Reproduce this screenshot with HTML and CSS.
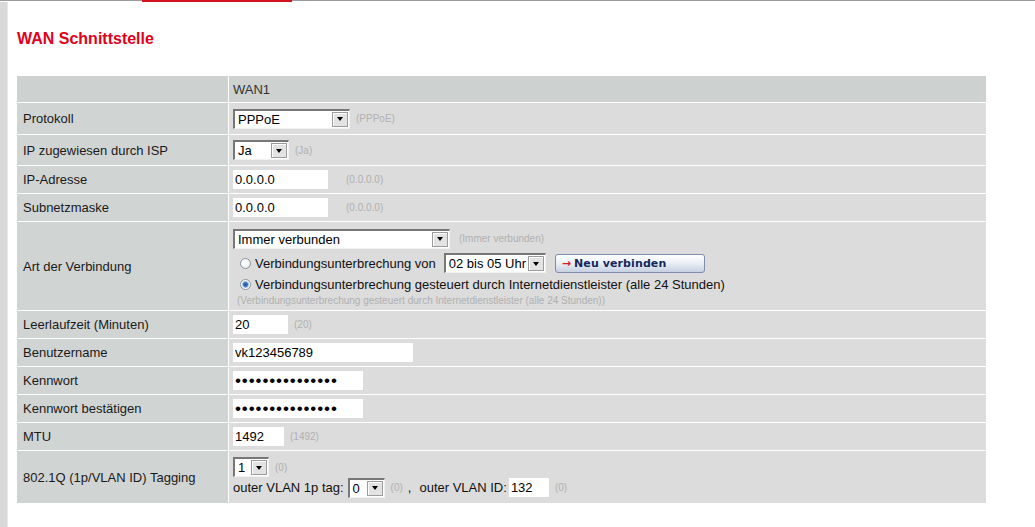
FILE: index.html
```html
<!DOCTYPE html>
<html lang="de">
<head>
  <meta charset="UTF-8">
  <title>WAN Schnittstelle</title>
  <link rel="stylesheet" href="styles.css">
</head>
<body>
  <div class="topbar">
    <span class="line first"></span><span class="tab"></span><span class="line rest"></span>
  </div>

  <div class="frame">
    <div class="side"></div>
    <div class="main">
      <h1 class="title">WAN Schnittstelle</h1>

      <table class="cfg">
        <colgroup><col class="c-lbl"><col class="c-val"></colgroup>
        <tr class="hdr">
          <td class="lbl"></td>
          <td class="val">WAN1</td>
        </tr>
        <tr class="h31">
          <td class="lbl">Protokoll</td>
          <td class="val"><span class="sel w117"><span class="txt">PPPoE</span><span class="arr"></span></span><span class="hint">(PPPoE)</span></td>
        </tr>
        <tr class="h30">
          <td class="lbl">IP zugewiesen durch ISP</td>
          <td class="val"><span class="sel w56"><span class="txt">Ja</span><span class="arr"></span></span><span class="hint">(Ja)</span></td>
        </tr>
        <tr class="h27">
          <td class="lbl">IP-Adresse</td>
          <td class="val"><input class="inp w95" type="text" value="0.0.0.0"><span class="hint far">(0.0.0.0)</span></td>
        </tr>
        <tr class="h27">
          <td class="lbl">Subnetzmaske</td>
          <td class="val"><input class="inp w95" type="text" value="0.0.0.0"><span class="hint far">(0.0.0.0)</span></td>
        </tr>
        <tr class="h88">
          <td class="lbl">Art der Verbindung</td>
          <td class="val art">
            <div class="ln l1"><span class="sel w217"><span class="txt">Immer verbunden</span><span class="arr"></span></span><span class="hint wide">(Immer verbunden)</span></div>
            <div class="ln l2">
              <input class="rad" type="radio" name="trennung">
              <span>Verbindungsunterbrechung von</span>
              <span class="sel w102 uhr"><span class="txt">02 bis 05 Uhr</span><span class="arr"></span></span>
              <button class="btn-neu"><span class="go">&#8594;</span>Neu verbinden</button>
            </div>
            <div class="ln l3">
              <input class="rad" type="radio" name="trennung" checked>
              <span>Verbindungsunterbrechung gesteuert durch Internetdienstleister (alle 24 Stunden)</span>
            </div>
            <div class="hint l4">(Verbindungsunterbrechung gesteuert durch Internetdienstleister (alle 24 Stunden))</div>
          </td>
        </tr>
        <tr class="h27">
          <td class="lbl">Leerlaufzeit (Minuten)</td>
          <td class="val"><input class="inp w55" type="text" value="20"><span class="hint">(20)</span></td>
        </tr>
        <tr class="h27">
          <td class="lbl">Benutzername</td>
          <td class="val"><input class="inp w180" type="text" value="vk123456789"></td>
        </tr>
        <tr class="h27">
          <td class="lbl">Kennwort</td>
          <td class="val"><input class="inp pw w130" type="password" value="geheimpasswort1"></td>
        </tr>
        <tr class="h27">
          <td class="lbl">Kennwort bestätigen</td>
          <td class="val"><input class="inp pw w130" type="password" value="geheimpasswort1"></td>
        </tr>
        <tr class="h27">
          <td class="lbl">MTU</td>
          <td class="val"><input class="inp w51" type="text" value="1492"><span class="hint">(1492)</span></td>
        </tr>
        <tr class="h52">
          <td class="lbl">802.1Q (1p/VLAN ID) Tagging</td>
          <td class="val vlan">
            <div class="ln v1"><span class="sel w36"><span class="txt">1</span><span class="arr"></span></span><span class="hint">(0)</span></div>
            <div class="ln v2">
              <span>outer VLAN 1p tag:</span>
              <span class="sel w37 tag"><span class="txt">0</span><span class="arr"></span></span>
              <span class="hint">(0)</span><span class="comma">,</span>
              <span class="vid">outer VLAN ID:</span>
              <input class="inp w40" type="text" value="132">
              <span class="hint">(0)</span>
            </div>
          </td>
        </tr>
      </table>
    </div>
  </div>
</body>
</html>
```

FILE: styles.css
```css
* {
  box-sizing: border-box;
  margin: 0;
  padding: 0;
}

body {
  font-family: "Liberation Sans", Arial, sans-serif;
  font-size: 13px;
  color: #1a1a1a;
  background: #fff;
}

/* top line with the active tab */
.topbar {
  display: flex;
  align-items: flex-start;
  height: 2px;
}
.topbar .line { height: 1px; background: #9a9a9a; }
.topbar .first { width: 142px; }
.topbar .rest { flex: 1; }
.topbar .tab { width: 150px; height: 2px; background: #d4121e; }

.frame {
  display: flex;
  min-height: calc(100vh - 2px);
}

.side {
  width: 8px;
  flex: none;
  background: #d9d9d9;
  border-right: 1px solid #e9e9e9;
}

.main {
  flex: 1;
  padding-left: 8px;
}

.title {
  margin: 28px 0 0 1px;
  font-size: 16px;
  line-height: 18px;
  font-weight: bold;
  color: #e2001a;
}

/* settings table */
.cfg {
  margin-top: 27px;
  width: 970px;
  table-layout: fixed;
  border-collapse: separate;
  border-spacing: 1px;
  background: #fff;
}
.c-lbl { width: 211px; }
.c-val { width: 757px; }

.cfg td {
  vertical-align: middle;
  white-space: nowrap;
}
.cfg td.lbl {
  background: #d0d4d3;
  padding-left: 6px;
}
.cfg td.val {
  background: #dcdcdc;
  padding-left: 4px;
  color: #111;
}
.cfg tr.hdr td { background: #cdd1d0; height: 26px; color: #333; }

.h27 td { height: 27px; }
.h30 td { height: 30px; }
.h31 td { height: 31px; }
.h52 td { height: 52px; }
.h88 td { height: 88px; }

/* fake windows select */
.sel {
  display: inline-flex;
  align-items: center;
  justify-content: space-between;
  height: 20px;
  background: #fff;
  border-style: solid;
  border-width: 2px 1px 1px 2px;
  border-color: #777 #f2f2f2 #f2f2f2 #777;
  padding: 0 1px 0 3px;
  vertical-align: middle;
  font-size: 13px;
  color: #000;
}
.sel .arr {
  width: 16px;
  height: 15px;
  display: flex;
  align-items: center;
  justify-content: center;
  background: #e3e3e3;
  border: 1px solid #9c9c9c;
  box-shadow: inset 1px 1px 0 #fff;
}
.sel .arr::after {
  content: '';
  border-left: 3px solid transparent;
  border-right: 3px solid transparent;
  border-top: 4px solid #000;
}

.w36 { width: 36px; }
.w37 { width: 37px; }
.w40 { width: 40px; }
.w51 { width: 51px; }
.w55 { width: 55px; }
.w56 { width: 56px; }
.w95 { width: 95px; }
.w102 { width: 102px; }
.w117 { width: 117px; }
.w130 { width: 130px; }
.w180 { width: 180px; }
.w217 { width: 217px; }

.inp {
  height: 19px;
  border: 0;
  padding: 0 2px;
  background: #fff;
  font-family: "Liberation Sans", Arial, sans-serif;
  font-size: 13px;
  color: #000;
  vertical-align: middle;
  outline: none;
}
.inp.pw {
  font-size: 17px;
  letter-spacing: 0.9px;
}

.hint {
  font-size: 10px;
  color: #b0b0b0;
  margin-left: 6px;
  vertical-align: middle;
}
.hint.far { margin-left: 18px; }
.hint.wide { margin-left: 9px; }

/* Art der Verbindung */
.cfg td.art { vertical-align: top; padding-top: 6px; }
.ln { display: flex; align-items: center; }
.l1 { height: 21px; }
.l2 { height: 22px; margin-top: 3px; }
.l3 { height: 16px; margin-top: 2px; }
.l4 { margin: 3px 0 0 4px; line-height: 11px; }

.rad {
  appearance: none;
  -webkit-appearance: none;
  width: 11px;
  height: 11px;
  margin: 0 4px 0 7px;
  border: 1px solid #8696a6;
  border-radius: 50%;
  background: radial-gradient(circle at 40% 40%, #fff 30%, #d8d8d8 100%);
  flex: none;
}
.rad:checked {
  background: radial-gradient(circle at 50% 50%, #1d4f96 0, #3c74c0 2px, #9fc0e6 3px, #fff 4px, #dedede 100%);
}

.sel.uhr { margin-left: 8px; }

.btn-neu {
  margin-left: 9px;
  width: 150px;
  height: 19px;
  border: 1px solid #7d8dab;
  border-radius: 3px;
  background: linear-gradient(#ffffff, #e9eef6 50%, #c6d0e2);
  font-family: "DejaVu Sans", Verdana, sans-serif;
  font-size: 11px;
  font-weight: bold;
  letter-spacing: 0.1px;
  color: #16275a;
  text-align: left;
  padding-left: 6px;
}
.btn-neu .go {
  color: #d41c24;
  margin-right: 3px;
}

/* VLAN row */
.cfg td.vlan { vertical-align: top; padding-top: 6px; }
.v1 { height: 20px; }
.v2 { height: 21px; }
.sel.tag { margin-left: 4px; }
.comma { margin-left: 5px; }
.vid { margin-left: 8px; margin-right: 2px; }
```
